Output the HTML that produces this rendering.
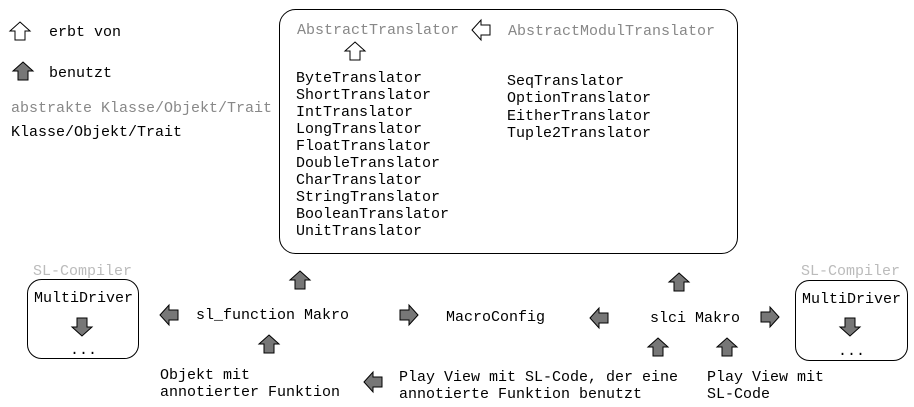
<!DOCTYPE html>
<html><head><meta charset="utf-8"><style>
html,body{margin:0;padding:0;background:#fff;width:914px;height:407px;overflow:hidden}
svg text{font-family:"Liberation Mono",monospace;font-size:15px;fill:#000}
.g{fill:#888}.l{fill:#bbb}
</style></head><body>
<svg width="914" height="407" xmlns="http://www.w3.org/2000/svg">
<defs>
<path id="a" d="M0,-9 L10,0 L5,0 L5,9 L-5,9 L-5,0 L-10,0 Z"/>
</defs>
<g stroke="#000" stroke-width="1">
<use href="#a" x="20" y="31" fill="#fff"/>
<use href="#a" x="23" y="71" fill="#777"/>
<use href="#a" x="355" y="51" fill="#fff"/>
<use href="#a" transform="translate(481,30) rotate(-90)" fill="#fff"/>
<use href="#a" x="300" y="280" fill="#777"/>
<use href="#a" x="679" y="282" fill="#777"/>
<use href="#a" x="269" y="344" fill="#777"/>
<use href="#a" x="658" y="347" fill="#777"/>
<use href="#a" x="727" y="347" fill="#777"/>
<use href="#a" transform="translate(169,315) rotate(-90)" fill="#777"/>
<use href="#a" transform="translate(599,318) rotate(-90)" fill="#777"/>
<use href="#a" transform="translate(373,382) rotate(-90)" fill="#777"/>
<use href="#a" transform="translate(409,315) rotate(90)" fill="#777"/>
<use href="#a" transform="translate(770,317) rotate(90)" fill="#777"/>
<use href="#a" transform="translate(82,327) rotate(180)" fill="#777"/>
<use href="#a" transform="translate(850,327) rotate(180)" fill="#777"/>
<rect x="279.5" y="9.5" width="458" height="244" rx="16" fill="none"/>
<rect x="27.5" y="279.5" width="111" height="79" rx="14" fill="none"/>
<rect x="795.5" y="280.5" width="112" height="80" rx="14" fill="none"/>
</g>
<text x="49" y="36">erbt von</text>
<text x="49" y="77">benutzt</text>
<text x="11" y="112" class="g">abstrakte Klasse/Objekt/Trait</text>
<text x="11" y="136">Klasse/Objekt/Trait</text>
<text x="297" y="34" class="g">AbstractTranslator</text>
<text x="508" y="35" class="g">AbstractModulTranslator</text>
<text x="296" y="82">ByteTranslator</text>
<text x="296" y="99">ShortTranslator</text>
<text x="296" y="116">IntTranslator</text>
<text x="296" y="133">LongTranslator</text>
<text x="296" y="150">FloatTranslator</text>
<text x="296" y="167">DoubleTranslator</text>
<text x="296" y="184">CharTranslator</text>
<text x="296" y="201">StringTranslator</text>
<text x="296" y="218">BooleanTranslator</text>
<text x="296" y="235">UnitTranslator</text>
<text x="507" y="85">SeqTranslator</text>
<text x="507" y="102">OptionTranslator</text>
<text x="507" y="120">EitherTranslator</text>
<text x="507" y="137">Tuple2Translator</text>
<text x="33" y="275" class="l">SL-Compiler</text>
<text x="801" y="275" class="l">SL-Compiler</text>
<text x="34" y="302">MultiDriver</text>
<text x="802" y="303">MultiDriver</text>
<text x="70" y="354">...</text>
<text x="838" y="355">...</text>
<text x="196" y="319">sl_function Makro</text>
<text x="446" y="321">MacroConfig</text>
<text x="650" y="322">slci Makro</text>
<text x="160" y="379">Objekt mit</text>
<text x="160" y="396">annotierter Funktion</text>
<text x="399" y="381">Play View mit SL-Code, der eine</text>
<text x="399" y="398">annotierte Funktion benutzt</text>
<text x="707" y="381">Play View mit</text>
<text x="707" y="398">SL-Code</text>
</svg>
</body></html>
